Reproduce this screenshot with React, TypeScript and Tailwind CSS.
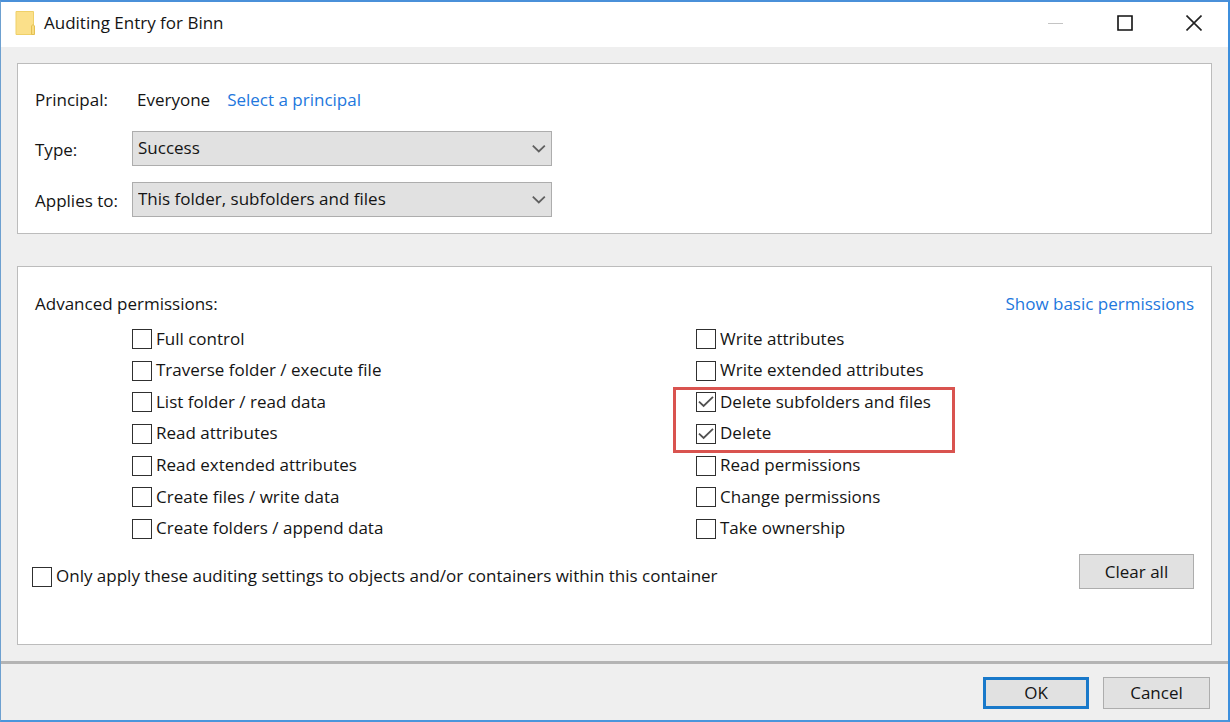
import { useState } from 'react';

const leftPermissions = [
  'Full control',
  'Traverse folder / execute file',
  'List folder / read data',
  'Read attributes',
  'Read extended attributes',
  'Create files / write data',
  'Create folders / append data',
];

const rightPermissions = [
  'Write attributes',
  'Write extended attributes',
  'Delete subfolders and files',
  'Delete',
  'Read permissions',
  'Change permissions',
  'Take ownership',
];

interface CheckProps {
  label: string;
  checked: boolean;
  onChange: () => void;
}

function Check({ label, checked, onChange }: CheckProps) {
  return (
    <label className="flex items-center gap-1 whitespace-nowrap">
      <span className="grid shrink-0 pt-px">
        <input
          type="checkbox"
          checked={checked}
          onChange={onChange}
          className="peer col-start-1 row-start-1 w-5 h-5 appearance-none border border-[#303030] bg-white"
        />
        <svg
          className="hidden peer-checked:block pointer-events-none col-start-1 row-start-1 w-5 h-5"
          viewBox="0 0 20 20"
          fill="none"
        >
          <path d="M3 9.6L7.6 14L17 4.8" stroke="#505050" strokeWidth="1.8" />
        </svg>
      </span>
      {label}
    </label>
  );
}

interface DropdownProps {
  id: string;
  options: string[];
}

function Dropdown({ id, options }: DropdownProps) {
  return (
    <div className="grid w-[420px] max-w-full items-center">
      <select
        id={id}
        className="col-start-1 row-start-1 h-[35px] w-full appearance-none border border-[#adadad] bg-[#e1e1e1] pl-[5px] pr-8 pb-px"
      >
        {options.map((option) => (
          <option key={option}>{option}</option>
        ))}
      </select>
      <svg
        className="pointer-events-none col-start-1 row-start-1 mr-[5px] h-4 w-4 justify-self-end"
        viewBox="0 0 16 16"
        fill="none"
      >
        <path d="M1.8 4.6L7.8 10.4L13.8 4.6" stroke="#606060" strokeWidth="1.8" />
      </svg>
    </div>
  );
}

export default function App() {
  const [selected, setSelected] = useState<string[]>(['Delete subfolders and files', 'Delete']);
  const [onlyContainer, setOnlyContainer] = useState(false);

  const toggle = (name: string) => {
    setSelected((prev) =>
      prev.includes(name) ? prev.filter((item) => item !== name) : [...prev, name]
    );
  };

  return (
    <div className="flex min-h-screen flex-col border-y-2 border-l border-r-2 border-t-[#4a90d9] border-r-[#3d8fdd] border-b-[#4a96dc] border-l-[#6da0d0] bg-[#efefef] font-['Open_Sans','Noto_Sans',sans-serif] text-[17px] leading-6 text-[#141414]">
      {/* Title bar */}
      <header className="flex h-[45px] items-center bg-white pb-[3px] pl-[14px]">
        <svg className="h-6 w-5" viewBox="0 0 20 24">
          <path d="M1 .5H18.5V23.5H1Z" fill="#fbe08a" stroke="#efd068" />
          <path d="M16.5 23.5V15L18 13.5L19.5 15V23.5Z" fill="#f8dc80" stroke="#e4c052" />
        </svg>
        <h1 className="ml-[9px] flex-1">Auditing Entry for Binn</h1>
        <button aria-label="Minimize" disabled className="flex h-full w-[69px] items-center justify-center">
          <svg className="h-4 w-4" viewBox="0 0 16 16">
            <path d="M0 8.5H15" stroke="#c4c4c4" />
          </svg>
        </button>
        <button aria-label="Maximize" className="flex h-full w-[69px] items-center justify-center">
          <svg className="h-4 w-4" viewBox="0 0 16 16" fill="none">
            <path d="M1 1H15V15H1Z" stroke="#111111" strokeWidth="1.6" />
          </svg>
        </button>
        <button aria-label="Close" className="flex h-full w-[69px] items-center justify-center">
          <svg className="h-4 w-4" viewBox="0 0 16 16">
            <path d="M.5 .5L15.5 15.5M15.5 .5L.5 15.5" stroke="#222222" strokeWidth="1.6" />
          </svg>
        </button>
      </header>

      <main className="flex flex-1 flex-col gap-8 px-4 pt-4 pb-4">
        {/* Principal */}
        <section className="grid grid-cols-[97px_1fr] gap-y-4 border border-[#bcbcbc] bg-white pt-6 pb-4 pl-[17px] pr-4">
          <span>Principal:</span>
          <div className="flex gap-[17px] pl-[5px] pb-[3px]">
            <span>Everyone</span>
            <a href="#" className="text-[#2277dd]">Select a principal</a>
          </div>
          <label htmlFor="type" className="self-center pt-[3px]">Type:</label>
          <Dropdown id="type" options={['Success', 'Fail', 'All']} />
          <label htmlFor="applies-to" className="self-center pt-[3px]">Applies to:</label>
          <Dropdown
            id="applies-to"
            options={['This folder, subfolders and files', 'This folder only', 'Files only']}
          />
        </section>

        {/* Permissions */}
        <section className="flex-1 border border-[#bcbcbc] bg-white pt-[25px] pl-[14px] pr-[17px]">
          <div className="flex justify-between pl-[3px]">
            <h2>Advanced permissions:</h2>
            <a href="#" className="text-[#2277dd]">Show basic permissions</a>
          </div>
          <div className="mt-[7px] grid grid-cols-2 pl-[100px]">
            <div className="grid h-[221px] grid-rows-7">
              {leftPermissions.map((name) => (
                <Check key={name} label={name} checked={selected.includes(name)} onChange={() => toggle(name)} />
              ))}
            </div>
            <div className="relative grid h-[221px] grid-rows-7 pl-[33px]">
              {rightPermissions.map((name) => (
                <Check key={name} label={name} checked={selected.includes(name)} onChange={() => toggle(name)} />
              ))}
              {/* Highlight around the delete permissions */}
              <div className="pointer-events-none absolute top-[64px] left-[10px] h-[66px] w-[282px] border-3 border-[#d9534f]" />
            </div>
          </div>
          <div className="mt-[10px] flex items-start justify-between">
            <div className="pt-[10px]">
              <Check
                label="Only apply these auditing settings to objects and/or containers within this container"
                checked={onlyContainer}
                onChange={() => setOnlyContainer(!onlyContainer)}
              />
            </div>
            <button
              onClick={() => setSelected([])}
              className="h-[35px] w-[115px] border border-[#adadad] bg-[#e1e1e1]"
            >
              Clear all
            </button>
          </div>
        </section>
      </main>

      <footer className="flex justify-end gap-[14px] border-t-3 border-[#b4b4b4] px-[18px] pt-[13px] pb-[11px]">
        <button className="h-8 w-[106px] border-3 border-[#1979ca] bg-[#e1e1e1]">OK</button>
        <button className="h-8 w-[107px] border border-[#adadad] bg-[#e1e1e1]">Cancel</button>
      </footer>
    </div>
  );
}
